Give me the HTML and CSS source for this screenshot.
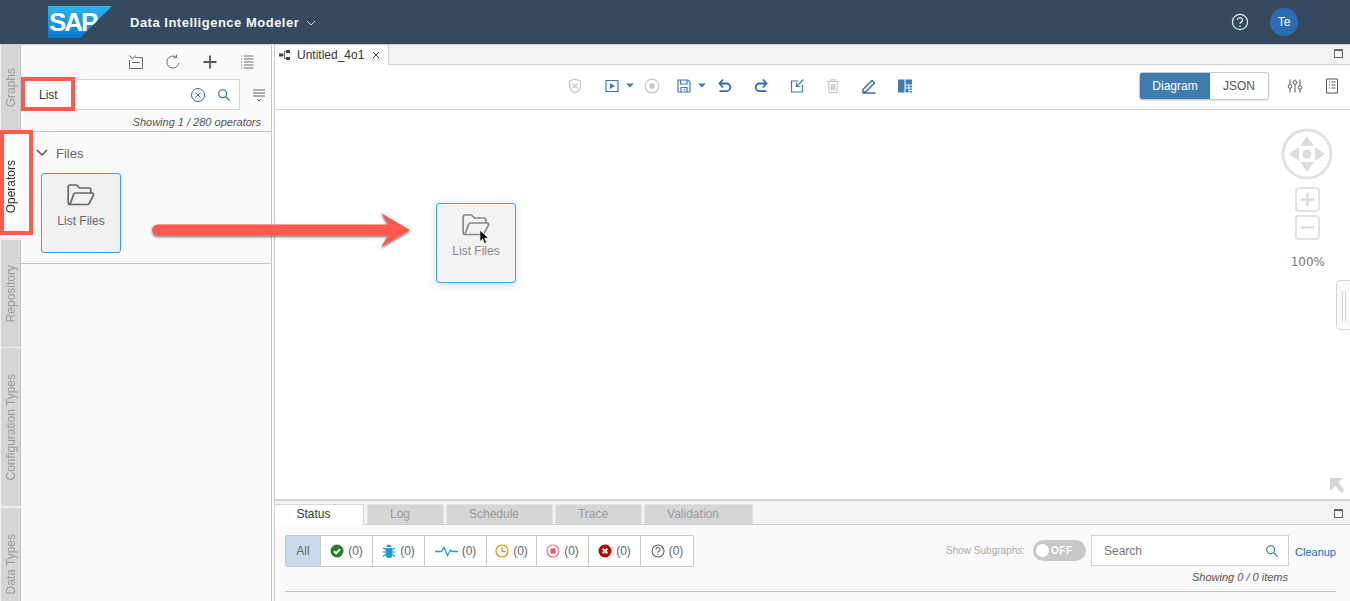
FILE: index.html
```html
<!DOCTYPE html>
<html lang="en">
<head>
  <meta charset="UTF-8" />
  <title>Data Intelligence Modeler</title>
  <link rel="stylesheet" href="styles.css">
</head>
<body>
  <header class="shell">
    <div class="logo"><span>SAP</span></div>
    <div class="app-title">Data Intelligence Modeler</div>
    <svg class="title-caret" viewBox="0 0 10 6"><path d="M1 1l4 4 4-4"/></svg>
    <svg class="help" viewBox="0 0 18 18">
      <circle cx="9" cy="9" r="7.6"/>
      <path d="M6.5 7a2.5 2.4 0 1 1 3.7 2.1c-.9.5-1.2 1-1.2 2"/>
      <path d="M9 12.6v1.3"/>
    </svg>
    <div class="avatar">Te</div>
  </header>

  <div class="workspace">
    <nav class="rail">
      <div class="rail-tab tab-graphs"><span>Graphs</span></div>
      <div class="rail-tab tab-operators active"><span>Operators</span></div>
      <div class="rail-tab tab-repository"><span>Repository</span></div>
      <div class="rail-tab tab-config"><span>Configuration Types</span></div>
      <div class="rail-tab tab-data"><span>Data Types</span></div>
    </nav>

    <aside class="sidebar">
      <div class="side-tools">
        <svg viewBox="0 0 16 16"><path d="M1.5 1.5l3 3.5 3-3.5M7 3.500h7.500v11h-13V6M4 8.500h8"/></svg>
        <svg viewBox="0 0 16 16"><path d="M13.800 9a6 6 0 1 1-2.300-5.700M11.500 .8v3h-3"/></svg>
        <svg class="tool-plus" viewBox="0 0 16 16"><path d="M8 1.500v13M1.500 8h13"/></svg>
        <svg viewBox="0 0 16 16"><path d="M5 2h9.500M5 5h9.500M5 8h9.500M5 11h9.500M5 14h9.500M2 2h1M2 5h1M2 8h1M2 11h1M2 14h1"/></svg>
      </div>
      <div class="search-row">
        <div class="search-box">
          <span class="search-text">List</span>
          <svg class="clear" viewBox="0 0 16 16"><circle cx="8" cy="8" r="6.500"/><path d="M5.500 5.500l5 5M10.500 5.500l-5 5"/></svg>
          <svg class="glass" viewBox="0 0 16 16"><circle cx="6.500" cy="6.500" r="4.500"/><path d="M10 10l4.500 4.500"/></svg>
        </div>
        <svg class="filter" viewBox="0 0 14 14"><path d="M1 2h12M1 5h12M1 8h12M5 11l2 2 2-2"/></svg>
      </div>
      <div class="side-count">Showing 1 / 280 operators</div>
      <section class="group">
        <div class="group-head">
          <svg viewBox="0 0 12 8"><path d="M1 1l5 5 5-5"/></svg>
          <span>Files</span>
        </div>
        <div class="op-card">
          <svg class="folder" viewBox="0 0 28 22"><path d="M3 20.500c-1 0-1.800-.8-1.800-1.800V2.800C1.200 1.800 2 1 3 1h6.500l3 3h9.500c1 0 1.800.8 1.800 1.800V9M3 20.500h17.500c.8 0 1.400-.4 1.700-1.100l4.300-8.200c.4-1-.2-2.200-1.500-2.200H8.500c-.8 0-1.500.4-1.800 1.100L3 20.500z"/></svg>
          <span>List Files</span>
        </div>
      </section>
    </aside>

    <div class="splitter"></div>

    <main class="main">
      <div class="doc-tabs">
        <div class="doc-tab">
          <svg class="graph-ico" viewBox="0 0 12 10"><path d="M0 3.500h4v3H0zM7 0h4v3H7zM7 7h4v3H7z"/><path class="thin" d="M4 5h1.500V1.500H7M5.500 5v3.500H7"/></svg>
          <span>Untitled_4o1</span>
          <svg class="close" viewBox="0 0 8 8"><path d="M1 1l6 6M7 1l-6 6"/></svg>
        </div>
        <span class="max-ico"></span>
      </div>

      <div class="toolbar">
        <div class="tool-icons">
          <svg class="dim" viewBox="0 0 16 16"><path d="M8 1.200l5.500 1.800v5c0 3.200-2.500 5.500-5.500 6.800C5 13.500 2.500 11.200 2.500 8V3z"/><path d="M5.500 5.500l5 5M10.500 5.500l-5 5"/></svg>
          <svg class="play" viewBox="0 0 16 16"><path d="M2 2.500h12v11H2z"/><path class="solid" d="M6 5l5 3-5 3z"/></svg>
          <svg class="caret" viewBox="0 0 8 5"><path class="solid" d="M0 .5h8L4 4.500z"/></svg>
          <svg class="dim stop" viewBox="0 0 16 16"><circle cx="8" cy="8" r="6.800"/><path class="solid" d="M5.500 5.500h5v5h-5z"/></svg>
          <svg class="save" viewBox="0 0 16 16"><path d="M2 2h10l2 2v10H2z"/><path d="M4.500 2v4h6.500V2M5 14v-4.500h6V14M8.500 11v1.500"/></svg>
          <svg class="caret" viewBox="0 0 8 5"><path class="solid" d="M0 .5h8L4 4.500z"/></svg>
          <svg class="heavy undo" viewBox="0 0 16 16"><path d="M6 1.500L2.500 5.500 6 9.500M3 5.500h6.500a3.800 3.800 0 0 1 0 7.600H2.500"/></svg>
          <svg class="heavy" viewBox="0 0 16 16"><path d="M10 1.500L13.500 5.500 10 9.500M13 5.500H6.500a3.800 3.800 0 0 0 0 7.600h7"/></svg>
          <svg viewBox="0 0 16 16"><path d="M9.500 3H2.500v11h11V7M14.500 1.500L7.500 8.500M7.500 4.500v4h4"/></svg>
          <svg class="dim" viewBox="0 0 16 16"><path d="M2 3.500h12M6 3.500V1.800h4v1.700M3.500 3.500l.7 11h7.600l.7-11M6.500 6v6.500M8 6v6.500M9.500 6v6.500"/></svg>
          <svg class="pencil" viewBox="0 0 16 16"><path d="M2 11.500L11 2.500l2.500 2.500-9 9H2zM1.500 15h13"/></svg>
          <svg viewBox="0 0 16 16"><path class="solid" d="M1 1.500h6.500v13H1zM8.500 1.500H15v5H8.500zM8.500 7.500h3v2h-3zM12.500 7.500H15v2h-2.500zM8.500 10.500h3v4h-3zM12.500 10.500H15v1.500h-2.500zM12.500 13H15v1.500h-2.500z"/></svg>
        </div>
        <div class="view-switch">
          <span class="on">Diagram</span>
          <span>JSON</span>
        </div>
        <svg class="right-ico" viewBox="0 0 16 16"><path d="M3 1.500v5M3 10.500v4M8 1.500v1M8 6.500v8M13 1.500v6M13 11.500v3"/><circle cx="3" cy="8.500" r="1.800"/><circle cx="8" cy="4.500" r="1.800"/><circle cx="13" cy="9.500" r="1.800"/></svg>
        <svg class="right-ico doc-ico" viewBox="0 0 16 16"><path d="M2.500 1h11v14h-11zM5 4h1M7.500 4h4M5 7h1M7.500 7h4M5 10h1M7.500 10h4"/></svg>
      </div>

      <div class="canvas">
        <svg class="nav-ctl" viewBox="0 0 52 112">
          <circle class="ring" cx="26" cy="26" r="24"/>
          <path class="fill" d="M26 8l7 10H19zM26 44l-7-10h14zM8 26l10-7v14zM44 26l-10 7V19z"/>
          <circle class="fill" cx="26" cy="26" r="4.500"/>
          <rect class="box" x="15" y="60" width="23" height="23" rx="3"/>
          <path class="bar" d="M26.500 65v13M20 71.500h13"/>
          <rect class="box" x="15" y="88" width="23" height="23" rx="3"/>
          <path class="bar" d="M20 99.500h13"/>
        </svg>
        <div class="zoom-pct">100%</div>
        <div class="side-handle"></div>
        <svg class="corner-arrow" viewBox="0 0 14 15"><path d="M0 0h13L8.500 4.500 14 12l-2.500 3-6-7L0 13z"/></svg>
        <div class="op-card ghost">
          <svg class="folder" viewBox="0 0 28 22"><path d="M3 20.500c-1 0-1.800-.8-1.800-1.800V2.800C1.200 1.800 2 1 3 1h6.500l3 3h9.500c1 0 1.800.8 1.800 1.800V9M3 20.500h17.500c.8 0 1.400-.4 1.700-1.100l4.300-8.200c.4-1-.2-2.200-1.500-2.200H8.500c-.8 0-1.500.4-1.800 1.100L3 20.500z"/></svg>
          <span>List Files</span>
        </div>
      </div>

      <div class="bottom">
        <div class="bottom-tabs">
          <span class="btab btab-status on">Status</span>
          <span class="btab btab-log">Log</span>
          <span class="btab btab-schedule">Schedule</span>
          <span class="btab btab-trace">Trace</span>
          <span class="btab btab-valid">Validation</span>
          <span class="max-ico"></span>
        </div>
        <div class="bottom-body">
          <div class="filter-row">
            <div class="status-group">
              <span class="st st-all">All</span>
              <span class="st st-a">
                <svg viewBox="0 0 14 14"><circle class="c-green" cx="7" cy="7" r="6.500"/><path class="tick" d="M4 7.200l2.200 2.200L10 5.200"/></svg>(0)
              </span>
              <span class="st st-a">
                <svg viewBox="0 0 14 14"><path class="c-blue" d="M4.500 3a2.500 2.500 0 0 1 5 0zM3.500 4h7v6.500a3.500 3.500 0 0 1-7 0z"/><path class="legs" d="M3.500 5.500L1 4M10.500 5.500L13 4M3.500 8H.5M10.500 8h3M3.500 10.500L1 12.500M10.500 10.500l2.500 2M7 4v10"/></svg>(0)
              </span>
              <span class="st st-b">
                <svg class="pulse" viewBox="0 0 23 12"><path d="M0 6.500h6.500L9 2.500l3.500 8 3-5.500 1.500 1.500h6"/></svg>(0)
              </span>
              <span class="st st-c">
                <svg viewBox="0 0 14 14"><circle class="c-orange" cx="7" cy="7" r="6"/><path class="c-orange" d="M7 3.200V7.500h3.800"/></svg>(0)
              </span>
              <span class="st st-a">
                <svg viewBox="0 0 14 14"><circle class="c-red" cx="7" cy="7" r="6"/><path class="c-redfill" d="M4.500 4.500h5v5h-5z"/></svg>(0)
              </span>
              <span class="st st-a">
                <svg viewBox="0 0 14 14"><circle class="c-dark" cx="7" cy="7" r="6.500"/><path class="tick" d="M4.700 4.700l4.600 4.600M9.300 4.700l-4.600 4.600"/></svg>(0)
              </span>
              <span class="st st-a">
                <svg viewBox="0 0 14 14"><circle class="c-gray" cx="7" cy="7" r="6"/><path class="c-gray" d="M5 5.500a2 2 0 1 1 3 1.700c-.7.400-1 .8-1 1.500M7 9.800v1.200"/></svg>(0)
              </span>
            </div>
            <div class="filter-right">
              <span class="sub-label">Show Subgraphs:</span>
              <div class="toggle"><i></i><b>OFF</b></div>
              <div class="log-search">
                <span>Search</span>
                <svg viewBox="0 0 16 16"><circle cx="6.500" cy="6.500" r="4.500"/><path d="M10 10l4.500 4.500"/></svg>
              </div>
              <a class="cleanup">Cleanup</a>
            </div>
          </div>
          <div class="item-count">Showing 0 / 0 items</div>
          <div class="bottom-rule"></div>
        </div>
      </div>
    </main>

    <!-- annotations drawn on top of the screenshot -->
    <div class="mark mark-search"></div>
    <div class="mark mark-tab"></div>
    <svg class="drag-arrow" viewBox="0 0 270 44">
      <defs>
        <filter id="soft" x="-5%" y="-30%" width="110%" height="170%">
          <feDropShadow dx="0" dy="1.500" stdDeviation="1.200" flood-color="#000" flood-opacity=".55"/>
        </filter>
      </defs>
      <path filter="url(#soft)" d="M8.500 15.500H239L232 4l29 17-29 17 7-11.500H8.500a5.500 5.500 0 0 1 0-11z"/>
    </svg>
    <svg class="pointer" viewBox="0 0 12 17"><path d="M1 1v12.500l3-2.800 2 4.800 2.200-1-2-4.600h4.300z"/></svg>
  </div>
</body>
</html>
```

FILE: styles.css
```css
* {
  box-sizing: border-box;
}
html, body {
  height: 100%;
}
body {
  margin: 0;
  overflow: hidden;
  font-family: "Liberation Sans", Arial, sans-serif;
  font-size: 12px;
  color: #333;
  background-color: #fff;
}
svg {
  display: block;
  fill: none;
  stroke: currentColor;
}

/* shell bar */
.shell {
  display: flex;
  align-items: center;
  height: 44px;
  padding-left: 48px;
  background-color: #354a5f;
  color: #fff;
}
.logo {
  width: 64px;
  height: 32px;
  margin-right: 18px;
  padding: 3px 0 0 1px;
  background: linear-gradient(#2bb5ee, #0a78d6);
  clip-path: polygon(0 0, 100% 0, 50% 100%, 0 100%);
}
.logo span {
  display: block;
  font-size: 26px;
  line-height: 26px;
  font-weight: bold;
  letter-spacing: -2px;
  color: #fff;
}
.app-title {
  font-size: 13px;
  font-weight: bold;
  letter-spacing: .5px;
  color: #f4f6f8;
}
.title-caret {
  width: 10px;
  height: 6px;
  margin: 1px 0 0 7px;
  color: #cfd6dd;
}
.help {
  width: 18px;
  height: 18px;
  margin-left: auto;
  color: #e8ecef;
  stroke-width: 1.200;
}
.avatar {
  width: 28px;
  height: 28px;
  margin: 0 52px 0 21px;
  border-radius: 50%;
  background-color: #2a6db5;
  font-size: 12px;
  line-height: 28px;
  text-align: center;
}

/* main frame */
.workspace {
  position: relative;
  display: flex;
  height: 557px;
  border-top: 1px solid #c9cdd0;
}

.rail {
  width: 21px;
  flex: none;
  display: flex;
  flex-direction: column;
  padding-left: 1px;
  background-color: #efefef;
}
.rail-tab {
  flex: none;
  display: flex;
  align-items: center;
  justify-content: center;
  background-color: #d6d6d6;
  border-right: 1px solid #c4c4c4;
  color: #9a9a9a;
  font-size: 12px;
}
.rail-tab span {
  writing-mode: vertical-rl;
  transform: rotate(180deg);
}
.rail-tab.active {
  background-color: #fff;
  border-right: 0;
  color: #333;
}
.tab-graphs { height: 85px; }
.tab-operators { height: 108px; margin-bottom: 2px; padding-top: 6px; }
.tab-repository { height: 107px; margin-bottom: 1px; }
.tab-config { height: 158px; margin-bottom: 2px; }
.tab-data { height: 112px; }

/* operators panel */
.sidebar {
  width: 250px;
  flex: none;
  background-color: #fafafa;
}
.side-tools {
  display: flex;
  justify-content: flex-end;
  gap: 21px;
  height: 34px;
  padding: 9px 16px 0 0;
  color: #6a6a6a;
}
.side-tools svg {
  width: 16px;
  height: 16px;
}
.side-tools .tool-plus {
  stroke-width: 1.800;
  color: #555;
}
.search-row {
  display: flex;
  align-items: center;
}
.search-box {
  display: flex;
  align-items: center;
  width: 219px;
  height: 31px;
  padding-left: 17px;
  background-color: #fff;
  border: 1px solid #d4d4d4;
}
.search-text {
  flex: 1;
  font-size: 12px;
  color: #333;
}
.clear {
  width: 16px;
  height: 16px;
  margin-right: 11px;
  color: #2c6a9e;
}
.glass {
  width: 14px;
  height: 14px;
  margin-right: 8px;
  color: #2c6a9e;
  stroke-width: 1.400;
}
.filter {
  width: 14px;
  height: 14px;
  margin-left: 12px;
  color: #666;
}
.side-count {
  height: 22px;
  padding: 6px 10px 0 0;
  border-bottom: 1px solid #c6c6c6;
  font-size: 11px;
  font-style: italic;
  text-align: right;
  color: #555;
}
.group {
  height: 132px;
  padding: 13px 0 0 20px;
  border-bottom: 1px solid #c6c6c6;
}
.group-head {
  display: flex;
  align-items: center;
  gap: 8px;
  margin: 0 0 12px -5px;
  height: 16px;
  font-size: 13px;
  color: #666;
}
.group-head svg {
  width: 12px;
  height: 8px;
  color: #555;
  stroke-width: 1.500;
}
.op-card {
  width: 80px;
  height: 80px;
  padding-top: 10px;
  background-color: #f1f1f1;
  border: 1px solid #3d9bea;
  border-radius: 3px;
  text-align: center;
  color: #666;
}
.op-card span {
  display: block;
  margin-top: 8px;
}
.folder {
  width: 28px;
  height: 22px;
  margin: 0 auto;
  color: #666;
  stroke-width: 1.700;
}

.splitter {
  width: 4px;
  flex: none;
  background-color: #fff;
  border-left: 1px solid #c6c6c6;
  border-right: 1px solid #c6c6c6;
}

.main {
  flex: 1;
  min-width: 0;
  display: flex;
  flex-direction: column;
}

/* document tabs */
.doc-tabs {
  display: flex;
  align-items: flex-end;
  height: 20px;
  background-color: #f3f4f4;
  border-bottom: 1px solid #cfcfcf;
}
.doc-tab {
  display: flex;
  align-items: center;
  width: 114px;
  height: 20px;
  padding-left: 4px;
  background-color: #fff;
  border-right: 1px solid #cfcfcf;
  margin-bottom: -1px;
  font-size: 12px;
  color: #333;
}
.graph-ico {
  width: 12px;
  height: 10px;
  margin-right: 6px;
  fill: #444;
  stroke: none;
}
.graph-ico .thin {
  fill: none;
  stroke: #444;
  stroke-width: .8;
}
.close {
  width: 8px;
  height: 8px;
  margin-left: 8px;
  color: #444;
}
.max-ico {
  width: 9px;
  height: 9px;
  margin: 0 7px 6px auto;
  border: 1px solid #666;
  border-top-width: 2px;
}

/* toolbar */
.toolbar {
  display: flex;
  align-items: center;
  height: 45px;
  padding: 0 0 3px 292px;
  border-bottom: 1px solid #d2d2d2;
  background-color: #fff;
}
.tool-icons {
  display: flex;
  align-items: center;
  gap: 20px;
  color: #3f7cb0;
}
.tool-icons svg {
  width: 16px;
  height: 16px;
  stroke-width: 1.200;
}
.tool-icons .dim {
  color: #c6c6c6;
}
.tool-icons .heavy {
  stroke-width: 1.800;
  color: #2f6ea6;
}
.tool-icons .pencil {
  stroke-width: 1.400;
  color: #2f6ea6;
}
.tool-icons .solid {
  fill: currentColor;
  stroke: none;
}
.tool-icons .caret {
  width: 8px;
  height: 5px;
  margin-left: -14px;
}
.tool-icons .play {
  margin-left: 1px;
}
.tool-icons .stop {
  margin-left: -10px;
}
.tool-icons .save {
  margin-left: -4px;
}
.tool-icons .undo {
  margin-left: -9px;
}
.view-switch {
  display: flex;
  height: 28px;
  margin-left: auto;
  border: 1px solid #c8c8c8;
  border-radius: 3px;
  box-shadow: 0 1px 2px rgba(0, 0, 0, .12);
  font-size: 12px;
  line-height: 26px;
  color: #555;
  overflow: hidden;
}
.view-switch span {
  width: 58px;
  text-align: center;
}
.view-switch .on {
  width: 70px;
  background-color: #3f7cb0;
  color: #fff;
}
.right-ico {
  width: 16px;
  height: 16px;
  margin-left: 18px;
  color: #555;
}
.doc-ico {
  margin: 0 10px 0 21px;
}

/* canvas */
.canvas {
  position: relative;
  height: 391px;
  background-color: #fff;
  border-bottom: 2px solid #d2d2d2;
}
.nav-ctl {
  position: absolute;
  top: 18px;
  right: 17px;
  width: 52px;
  height: 112px;
}
.nav-ctl .ring {
  stroke: #e2e2e2;
  stroke-width: 3;
  fill: #fff;
}
.nav-ctl .fill {
  fill: #dcdcdc;
  stroke: none;
}
.nav-ctl .box {
  stroke: #e2e2e2;
  stroke-width: 2;
}
.nav-ctl .bar {
  stroke: #dcdcdc;
  stroke-width: 2.500;
}
.zoom-pct {
  position: absolute;
  top: 145px;
  right: 25px;
  font-family: "DejaVu Sans", sans-serif;
  font-size: 12px;
  color: #777;
}
.side-handle {
  position: absolute;
  top: 170px;
  right: 0;
  width: 14px;
  height: 50px;
  background: linear-gradient(90deg, transparent 5px, #d4d4d4 5px, #d4d4d4 6px, transparent 6px, transparent 8px, #d4d4d4 8px, #d4d4d4 9px, transparent 9px) 0 10px / 100% 30px no-repeat #fafafa;
  border: 1px solid #d4d4d4;
  border-right: 0;
  border-radius: 5px 0 0 5px;
}
.corner-arrow {
  position: absolute;
  right: 6px;
  bottom: 6px;
  width: 14px;
  height: 15px;
  fill: #d6d6d6;
  stroke: none;
}
.ghost {
  position: absolute;
  top: 93px;
  left: 161px;
  background-color: #f3f3f3;
  border-color: #3ea6f2;
  box-shadow: 0 2px 8px rgba(0, 0, 0, .16);
  color: #888;
}
.ghost .folder {
  color: #888;
}

/* status panel */
.bottom {
  flex: 1;
  min-height: 0;
  background-color: #fafafa;
}
.bottom-tabs {
  display: flex;
  align-items: flex-end;
  height: 24px;
  padding-left: 0;
  background-color: #f3f4f4;
  border-bottom: 1px solid #cfcfcf;
}
.btab {
  height: 20px;
  margin-right: 2px;
  padding-right: 11px;
  background-color: #d6d6d6;
  border: 1px solid #e4e4e4;
  border-bottom: 0;
  color: #9a9a9a;
  font-size: 12px;
  line-height: 19px;
  text-align: center;
}
.btab.on {
  background-color: #fff;
  color: #333;
  margin-bottom: -1px;
  height: 21px;
  border-color: #d8d8d8;
}
.btab-status { width: 90px; margin-left: -1px; margin-right: 3px; }
.btab-log { width: 77px; }
.btab-schedule { width: 107px; }
.btab-trace { width: 87px; }
.btab-valid { width: 109px; }
.bottom-body {
  padding: 10px 14px 0 10px;
}
.filter-row {
  display: flex;
  align-items: flex-start;
  height: 32px;
}
.status-group {
  display: flex;
  height: 32px;
  background-color: #fff;
  border: 1px solid #c8c8c8;
  border-radius: 2px;
  color: #666;
}
.st {
  display: flex;
  align-items: center;
  justify-content: center;
  gap: 4px;
  border-right: 1px solid #c8c8c8;
  font-size: 12px;
}
.st:last-child {
  border-right: 0;
}
.st svg {
  width: 14px;
  height: 14px;
}
.st-all { width: 35px; background-color: #c9dbeb; }
.st-a { width: 52px; }
.st-b { width: 62px; }
.st-c { width: 50px; }
.st .pulse {
  width: 23px;
  height: 12px;
  color: #1b9ae0;
  stroke-width: 1.300;
}
.c-green, .c-dark {
  stroke: none;
}
.c-green { fill: #2b7d2b; }
.c-dark { fill: #bb0000; }
.tick {
  stroke: #fff;
  stroke-width: 2;
}
.c-blue {
  fill: #1a9be0;
  stroke: none;
}
.legs {
  stroke: #1a9be0;
  stroke-width: 1.200;
}
.c-orange {
  stroke: #e78c07;
  stroke-width: 1.200;
}
.c-red {
  stroke: #f2737a;
  stroke-width: 1.200;
}
.c-redfill {
  fill: #f2555e;
  stroke: none;
}
.c-gray {
  stroke: #666;
  stroke-width: 1.100;
}
.filter-right {
  display: flex;
  align-items: flex-start;
  margin-left: auto;
}
.sub-label {
  margin-top: 10px;
  font-size: 10px;
  color: #aaa;
}
.toggle {
  display: flex;
  align-items: center;
  width: 53px;
  height: 21px;
  margin: 5px 5px 0 8px;
  padding-left: 3px;
  background-color: #c8c8c8;
  border-radius: 11px;
  color: #fff;
}
.toggle i {
  width: 13px;
  height: 13px;
  border-radius: 50%;
  background-color: #fff;
}
.toggle b {
  margin-left: 2px;
  font-size: 10px;
  letter-spacing: .5px;
}
.log-search {
  display: flex;
  align-items: center;
  justify-content: space-between;
  width: 198px;
  height: 31px;
  padding: 0 9px 0 12px;
  background-color: #fff;
  border: 1px solid #d0d0d0;
  color: #777;
}
.log-search svg {
  width: 14px;
  height: 14px;
  color: #2c6a9e;
  stroke-width: 1.300;
}
.cleanup {
  margin: 11px 0 0 6px;
  font-size: 11px;
  color: #0a6ed1;
}
.item-count {
  margin: 4px 48px 0 0;
  font-size: 11px;
  font-style: italic;
  text-align: right;
  color: #555;
}
.bottom-rule {
  height: 1px;
  margin-top: 8px;
  background-color: #c6c6c6;
}

/* red annotations */
.mark {
  position: absolute;
  border: 4px solid #ff5a4d;
}
.mark-search {
  top: 32px;
  left: 21px;
  width: 54px;
  height: 34px;
}
.mark-tab {
  top: 85px;
  left: 0;
  width: 33px;
  height: 105px;
}
.drag-arrow {
  position: absolute;
  top: 164px;
  left: 149px;
  width: 270px;
  height: 44px;
  fill: #ff5a4d;
  stroke: none;
}
.pointer {
  position: absolute;
  top: 184px;
  left: 479px;
  width: 11px;
  height: 16px;
  fill: #000;
  stroke: #fff;
  stroke-width: .8;
}
```
